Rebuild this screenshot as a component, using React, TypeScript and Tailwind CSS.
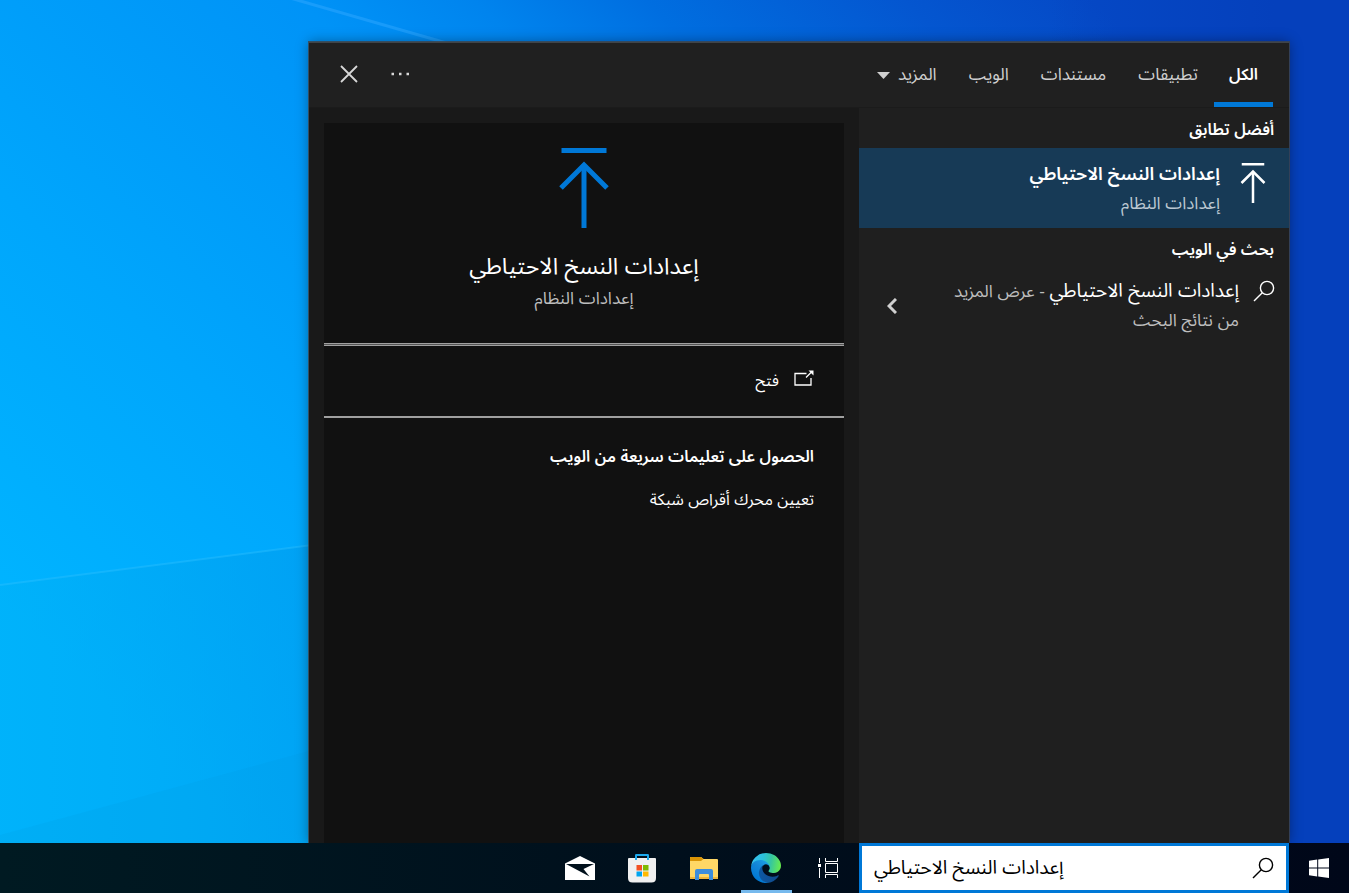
import { useState } from "react";

const BackupIcon = ({ className }: { className: string }) => (
    <svg viewBox="0 0 50 80" fill="none" stroke="currentColor" strokeWidth="5" className={className}>
        <path d="M2.5 2.5h45M25 17v63" />
        <path d="M2 40l23-23 23 23" />
    </svg>
);

const SearchIcon = ({ className }: { className: string }) => (
    <svg viewBox="0 0 22 22" fill="none" stroke="currentColor" strokeWidth="1.4" className={className}>
        <circle cx="14" cy="8" r="6.6" />
        <path d="M9.3 12.7L1 21" />
    </svg>
);

const EdgeIcon = () => (
    <svg viewBox="0 0 256 256" className="size-[30px]">
        <defs>
            <linearGradient id="edgeA" x1="58" y1="177" x2="236" y2="177" gradientUnits="userSpaceOnUse">
                <stop offset="0" stopColor="#0c59a4" />
                <stop offset="1" stopColor="#114a8b" />
            </linearGradient>
            <linearGradient id="edgeB" x1="150" y1="90" x2="42" y2="225" gradientUnits="userSpaceOnUse">
                <stop offset="0" stopColor="#1b9de2" />
                <stop offset="0.4" stopColor="#1487d8" />
                <stop offset="1" stopColor="#0078d4" />
            </linearGradient>
            <linearGradient id="edgeC" x1="10" y1="70" x2="250" y2="110" gradientUnits="userSpaceOnUse">
                <stop offset="0" stopColor="#35c1f1" />
                <stop offset="0.35" stopColor="#2cc1dc" />
                <stop offset="0.65" stopColor="#36c6a0" />
                <stop offset="1" stopColor="#66eb50" />
            </linearGradient>
        </defs>
        <path fill="url(#edgeA)" d="M231 190.5c-3.4 1.8-6.9 3.4-10.5 4.7a101.7 101.7 0 0 1-35.9 6.5c-47.3 0-88.5-32.5-88.5-74.3a31.5 31.5 0 0 1 16.4-27.3c-42.8 1.8-53.8 46.4-53.8 72.5 0 74 68.1 81.4 82.8 81.4 7.9 0 19.8-2.3 27-4.6l1.3-.4a128.3 128.3 0 0 0 66.6-52.8 4 4 0 0 0-5.4-5.7z" />
        <path fill="url(#edgeB)" d="M105.7 241.4a79.2 79.2 0 0 1-22.7-21.3 80.7 80.7 0 0 1 29.5-120c3.2-1.5 8.5-4.1 15.6-4a32.4 32.4 0 0 1 25.7 13 31.9 31.9 0 0 1 6.3 18.7c0-.2 24.5-79.6-80-79.6-43.9 0-80 41.6-80 78.2a130.2 130.2 0 0 0 12.1 56 128 128 0 0 0 156.4 67 75.5 75.5 0 0 1-62.8-8z" />
        <path fill="url(#edgeC)" d="M152.3 148.9c-.9 1-3.4 2.5-3.4 5.6 0 2.6 1.7 5.2 4.8 7.3 14.3 10 41.4 8.6 41.5 8.6a59.6 59.6 0 0 0 30.3-8.3 61.4 61.4 0 0 0 30.4-52.9c.3-22.4-8-37.3-11.3-43.9C223.5 23.9 177.7 0 128 0A128 128 0 0 0 0 126.2c.5-36.5 36.8-66 80-66 3.5 0 23.5.3 42 10.1 16.3 8.6 24.9 18.9 30.8 29.2 6.2 10.7 7.3 24.1 7.3 29.5s-2.7 13.3-7.8 19.9z" />
    </svg>
);

const TaskViewIcon = () => (
    <svg viewBox="0 0 21 20" fill="none" stroke="white" className="h-5 w-[21px]">
        <path d="M1.5 0v5M1.5 10v10M7.5 0v3.5h12V0M7.5 20v-3.5h12V20" />
        <path d="M7.5 5.5h12v9h-12z" />
        <path d="M0 6h3v3H0z" fill="white" stroke="none" />
    </svg>
);

const FolderIcon = () => (
    <svg viewBox="0 0 28 24" className="h-6 w-7">
        <path d="M0 1.5Q0 1 1 1h10l2.5 2H27q1 0 1 1v18q0 1-1 1H1q-1 0-1-1z" fill="#ffd766" />
        <path d="M0 1.5Q0 1 1 1h10l2.5 2-2.5 2H0z" fill="#d99406" />
        <path d="M0 21h28v1.5q0 .5-1 .5H1q-1 0-1-1z" fill="#f0b53a" />
        <path d="M5 24V15q0-2 2-2h14q2 0 2 2v9h-4v-5q0-1-1-1h-8q-1 0-1 1v5z" fill="#3c8ddc" />
    </svg>
);

const StoreIcon = () => (
    <svg viewBox="0 0 30 30" className="size-[30px]">
        <path d="M1 6q0-1 1-1h26q1 0 1 1v19q0 4.5-4.5 4.5h-19Q1 29.5 1 25z" fill="#f0f0f0" />
        <path d="M9 7V2.200Q9 2 9.200 2h11.600q.2 0 .2.200V7" fill="none" stroke="#1ca9ee" strokeWidth="2" />
        <path d="M9.500 12h5.500v5.500H9.500z" fill="#f25022" />
        <path d="M16 12h5.500v5.500H16z" fill="#7fba00" />
        <path d="M9.500 18.500h5.500V23.500H9.500z" fill="#00a4ef" />
        <path d="M16 18.500h5.500V23.500H16z" fill="#ffb900" />
    </svg>
);

const MailIcon = () => (
    <svg viewBox="0 0 30 24" className="h-6 w-[30px]">
        <path d="M0 7.500L15 0l15 7.500V24H0z" fill="white" />
        <path d="M1 8h28l-10.500 5 6 7.500L1 8z" fill="#00101c" />
    </svg>
);

const WindowsIcon = () => (
    <svg viewBox="0 0 20 20" fill="white" className="size-5">
        <path d="M0 2.700L8.200 1.500v8H0zM9.200 1.400L20 0v9.500H9.200zM0 10.500h8.200v8L0 17.300zM9.200 10.500H20V20L9.200 18.600z" />
    </svg>
);

const Wallpaper = () => (
    <svg viewBox="0 0 1349 893" preserveAspectRatio="none" className="absolute inset-0 size-full">
        <defs>
            <linearGradient id="sky" x1="0" y1="600" x2="820" y2="-260" gradientUnits="userSpaceOnUse">
                <stop offset="0" stopColor="#00b4ff" />
                <stop offset="0.25" stopColor="#00a6fc" />
                <stop offset="0.54" stopColor="#0093f7" />
                <stop offset="0.64" stopColor="#0084ee" />
                <stop offset="0.74" stopColor="#006ee0" />
                <stop offset="0.89" stopColor="#0456d0" />
                <stop offset="1" stopColor="#0549c6" />
            </linearGradient>
            <linearGradient id="floor" x1="0" y1="0" x2="320" y2="0" gradientUnits="userSpaceOnUse">
                <stop offset="0" stopColor="#00b0f4" stopOpacity="0.4" />
                <stop offset="1" stopColor="#009cee" stopOpacity="0.6" />
            </linearGradient>
            <linearGradient id="side" x1="1050" y1="0" x2="1349" y2="0" gradientUnits="userSpaceOnUse">
                <stop offset="0" stopColor="#0540bc" stopOpacity="0" />
                <stop offset="0.75" stopColor="#0540bc" />
            </linearGradient>
        </defs>
        <rect width="1349" height="893" fill="url(#sky)" />
        <rect x="1050" width="299" height="893" fill="url(#side)" />
        <path d="M0 585L320 544V893H0z" fill="url(#floor)" />
        <path d="M0 835L320 748V893H0z" fill="#0090d8" fillOpacity="0.12" />
        <path d="M0 585L320 544" stroke="#30c0ff" strokeOpacity="0.4" strokeWidth="2" />
        <path d="M290 -2L450 44" stroke="#30a8ff" strokeOpacity="0.5" strokeWidth="3" />
    </svg>
);

const tabs = ["الكل", "تطبيقات", "مستندات", "الويب"];

const apps = [
    { name: "عرض المهام", icon: <TaskViewIcon />, open: false },
    { name: "Microsoft Edge", icon: <EdgeIcon />, open: true },
    { name: "مستكشف الملفات", icon: <FolderIcon />, open: false },
    { name: "Microsoft Store", icon: <StoreIcon />, open: false },
    { name: "البريد", icon: <MailIcon />, open: false },
];

const App = () => {
    const [selected, setSelected] = useState("الكل");
    const [query, setQuery] = useState("إعدادات النسخ الاحتياطي");

    return (
        <div dir="rtl" className="relative flex min-h-screen flex-col overflow-hidden bg-[#0078d7] font-['Liberation_Sans','Noto_Sans_Arabic','Noto_Sans',sans-serif] text-white">
            <Wallpaper />

            <main className="relative flex flex-1 ps-[60px] pt-[42px]">
                <div className="flex w-[980px] flex-col border-t border-[#404448] bg-[#1f1f1f] shadow-[0_0_0_1px_rgba(64,68,72,0.8),0_0_12px_rgba(0,0,0,0.4)]">
                    <header className="flex h-[65px] items-center justify-between border-b border-[#1b1b1b] bg-[#202020] ps-4 pe-[27px]">
                        <nav className="flex h-full text-[17px] text-[#cfcfcf]">
                            {tabs.map((tab) => (
                                <button
                                    key={tab}
                                    onClick={() => setSelected(tab)}
                                    className={
                                        selected == tab
                                            ? "border-b-[5px] border-[#0078d7] px-[15px] pt-[5px] text-base font-semibold text-white"
                                            : "border-b-[5px] border-transparent px-4 pt-[5px]"
                                    }
                                >
                                    {tab}
                                </button>
                            ))}
                            <button className="flex items-center gap-2 px-4">
                                المزيد
                                <svg viewBox="0 0 13 7" className="h-[7px] w-[13px]" fill="currentColor">
                                    <path d="M0 0h13L6.500 7z" />
                                </svg>
                            </button>
                        </nav>
                        <div className="flex items-center gap-6 pb-0.5 text-[#d8d8d8]">
                            <button aria-label="خيارات" className="p-1">
                                <svg viewBox="0 0 20 4" className="h-1 w-5" fill="currentColor">
                                    <path d="M1.500 .8h2.500v2.500H1.500zM9 .8h2.500v2.500H9zM16.500 .8H19v2.500h-2.500z" />
                                </svg>
                            </button>
                            <button aria-label="إغلاق" className="p-1">
                                <svg viewBox="0 0 18 18" className="size-[18px]" fill="none" stroke="currentColor" strokeWidth="1.800">
                                    <path d="M1 1l16 16M17 1L1 17" />
                                </svg>
                            </button>
                        </div>
                    </header>

                    <div className="flex flex-1">
                        <section className="w-[430px]">
                            <h2 className="flex h-10 items-center px-[15px] pt-1 text-base font-semibold">أفضل تطابق</h2>
                            <button className="flex h-20 w-full items-start gap-5 bg-[#173a56] px-[23px] text-start">
                                <BackupIcon className="mt-[15px] h-10 w-[26px]" />
                                <span className="flex flex-col pt-3">
                                    <span className="text-lg leading-[29px] font-semibold">إعدادات النسخ الاحتياطي</span>
                                    <span className="text-[17px] leading-[29px] text-[#bcc8d2]">إعدادات النظام</span>
                                </span>
                            </button>
                            <h2 className="flex h-10 items-center px-[15px] pt-1 text-base font-semibold">بحث في الويب</h2>
                            <button className="flex w-full gap-[14px] pt-2 ps-[14px] pe-7 text-start">
                                <SearchIcon className="mt-1 size-[22px]" />
                                <span className="flex-1 text-[17px] leading-[29px] text-[#bdbdbd]">
                                    <span className="text-[19px] text-white">إعدادات النسخ الاحتياطي</span> - عرض المزيد
                                    <br />
                                    من نتائج البحث
                                </span>
                                <svg viewBox="0 0 10 16" className="h-4 w-[10px] self-center" fill="none" stroke="#d0d0d0" strokeWidth="3">
                                    <path d="M9 1L2 8l7 7" />
                                </svg>
                            </button>
                        </section>

                        <section className="flex flex-1 bg-[#191919] px-[15px] pt-[15px]">
                            <div className="flex flex-1 flex-col bg-[#111111]">
                                <div className="flex h-[220px] flex-col items-center pt-[25px]">
                                    <BackupIcon className="h-20 w-[50px] text-[#0078d7]" />
                                    <h1 className="mt-5 text-[23px] leading-9">إعدادات النسخ الاحتياطي</h1>
                                    <p className="text-[17px] leading-[29px] text-[#bdbdbd]">إعدادات النظام</p>
                                </div>
                                <div className="h-[3px] border-y border-[#a0a0a0] bg-[#555]" />
                                <button className="flex h-[70px] items-center gap-[15px] px-[30px] text-base">
                                    <svg viewBox="0 0 20 22" className="h-[22px] w-5" fill="none" stroke="currentColor" strokeWidth="1.300">
                                        <path d="M12.500 3.500H1v11.500h16V8M12 7.500L18 1.500" />
                                        <path d="M14.500 .5H19.500V5.500z" fill="currentColor" stroke="none" />
                                    </svg>
                                    فتح
                                </button>
                                <div className="h-0.5 bg-[#a0a0a0]" />
                                <div className="flex flex-col items-start gap-[19px] px-[30px] pt-[27px] text-base">
                                    <h2 className="font-semibold">الحصول على تعليمات سريعة من الويب</h2>
                                    <a href="#help">تعيين محرك أقراص شبكة</a>
                                </div>
                            </div>
                        </section>
                    </div>
                </div>
            </main>

            <footer className="relative flex h-[50px] bg-linear-to-l from-[#000719] via-[#000f1c] to-[#001a22]">
                <button aria-label="ابدأ" className="flex w-[60px] items-center justify-center">
                    <WindowsIcon />
                </button>
                <label className="flex w-[430px] items-center border-[3px] border-[#0078d7] bg-white px-3 text-black">
                    <SearchIcon className="size-[22px]" />
                    <input
                        aria-label="بحث"
                        value={query}
                        onChange={(e) => setQuery(e.target.value)}
                        className="min-w-0 flex-1 text-left text-[19px] outline-none"
                    />
                </label>
                {apps.map((app) => (
                    <button key={app.name} aria-label={app.name} className="flex w-[62px] flex-col items-center">
                        <span className="flex flex-1 items-center">{app.icon}</span>
                        {app.open && <span className="-mt-[3px] h-[3px] w-[51px] bg-[#76b9ed]" />}
                    </button>
                ))}
            </footer>
        </div>
    );
};

export default App;
